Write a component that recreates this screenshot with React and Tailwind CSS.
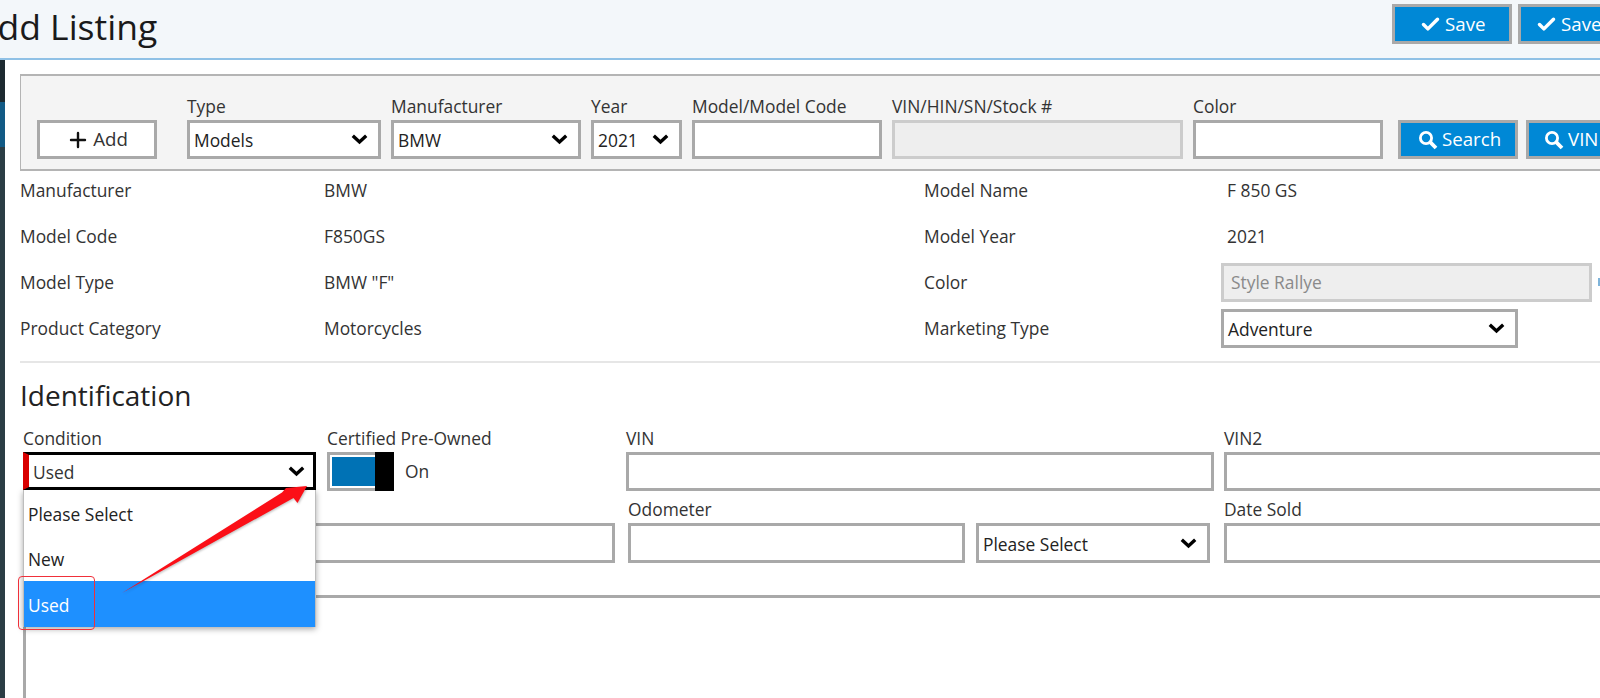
import React from "react";
import { Check, Plus } from "lucide-react";

const Chevron = () => (
  <svg width="17" height="11" viewBox="0 0 17 11" className="shrink-0">
    <path d="M1.8 1.8 L8.5 8 L15.2 1.8" fill="none" stroke="#000" strokeWidth="3.4" />
  </svg>
);

const SearchGlyph = () => (
  <svg width="20" height="20" viewBox="0 0 20 20" className="shrink-0">
    <circle cx="8" cy="8" r="5.6" fill="none" stroke="#fff" strokeWidth="2.8" />
    <path d="M12.2 12.2 L18 18" fill="none" stroke="#fff" strokeWidth="3.8" />
  </svg>
);

const Label = ({ children }) => (
  <div className="mb-[2px] h-[24px] whitespace-nowrap text-[17.4px] leading-[24px] text-[#333]">{children}</div>
);

const Input = ({ h = "h-[39px]", disabled = false, value = "" }) => (
  <input
    readOnly
    disabled={disabled}
    value={value}
    className={`block w-full border-[3px] px-[7px] text-[17.4px] outline-none ${h} ${
      disabled ? "border-[#cccccc] bg-[#eeeeee] text-[#8a8a8a]" : "border-[#a9a9a9] bg-white"
    }`}
  />
);

const Select = ({ value, h = "h-[39px]" }) => (
  <div className={`flex w-full items-center justify-between border-[3px] border-[#a9a9a9] bg-white pl-[4px] pr-[10px] text-[17.4px] text-[#222] ${h}`}>
    <span className="whitespace-nowrap pt-[2px]">{value}</span>
    <Chevron />
  </div>
);

const Field = ({ label, className = "", children }) => (
  <div className={`shrink-0 ${className}`}>
    <Label>{label}</Label>
    {children}
  </div>
);

const BlueButton = ({ icon, children, className = "" }) => (
  <button className={`flex shrink-0 items-center border-[3px] border-[#a9a9a9] bg-[#0088d6] text-[18.7px] text-white ${className}`}>
    {icon}
    {children}
  </button>
);

const rows = [
  ["Manufacturer", "BMW", "Model Name", <span className="pl-[6px]">F 850 GS</span>],
  ["Model Code", "F850GS", "Model Year", <span className="pl-[6px]">2021</span>],
  ["Model Type", 'BMW "F"', "Color", (
    <div className="flex items-center">
      <div className="w-[371px] shrink-0"><Input disabled value="Style Rallye" /></div>
      <span className="ml-[6px] h-[8px] w-[2px] shrink-0 bg-[#7fb4da]" />
    </div>
  )],
  ["Product Category", "Motorcycles", "Marketing Type", <div className="w-[297px]"><Select value="Adventure" /></div>],
];

export default function App() {
  return (
    <div className="relative h-[698px] w-[1600px] overflow-hidden bg-white text-[#333]" style={{ fontFamily: '"Open Sans", "Noto Sans", sans-serif' }}>
      <header className="flex h-[60px] items-start justify-between overflow-hidden border-b-2 border-[#8fc1e6] bg-[#f3f7fa]">
        <h1 className="ml-[-25px] whitespace-nowrap pt-[1px] text-[35.5px] leading-[50px] text-[#1a1a1a]">Add Listing</h1>
        <div className="flex w-[208px] shrink-0 gap-[6px] pt-[4px]">
          <BlueButton icon={<Check size={21} strokeWidth={4} />} className="h-[40px] w-[120px] gap-[4px] pl-[25px]">Save</BlueButton>
          <BlueButton icon={<Check size={21} strokeWidth={4} />} className="h-[40px] w-[160px] gap-[4px] pl-[15px]">Save</BlueButton>
        </div>
      </header>

      <div className="flex">
        <aside className="flex h-[638px] w-[5px] shrink-0 flex-col">
          <div className="h-[42px] bg-[#1d2a30]" />
          <div className="h-[45px] bg-[#125a85]" />
          <div className="flex-1 bg-[#2b3d45]" />
        </aside>

        <main className="w-[1700px] shrink-0 pl-[15px]">
          <section className="mt-[14px] flex h-[97px] items-start gap-[10px] border-x border-y-2 border-[#b4b4b4] bg-[#f4f4f4] pl-[16px] pt-[18px]">
            <button className="mt-[26px] mr-[20px] flex h-[39px] w-[120px] shrink-0 items-center justify-center gap-[3px] border-[3px] border-[#a9a9a9] bg-white text-[18.7px] text-[#333]">
              <Plus size={24} strokeWidth={2.4} className="text-[#111]" />
              Add
            </button>
            <Field label="Type" className="w-[194px]"><Select value="Models" /></Field>
            <Field label="Manufacturer" className="w-[190px]"><Select value="BMW" /></Field>
            <Field label="Year" className="w-[91px]"><Select value="2021" /></Field>
            <Field label="Model/Model Code" className="w-[190px]"><Input /></Field>
            <Field label="VIN/HIN/SN/Stock #" className="w-[291px]"><Input disabled /></Field>
            <Field label="Color" className="w-[190px]"><Input /></Field>
            <div className="ml-[5px] mt-[26px] flex gap-[8px]">
              <BlueButton icon={<SearchGlyph />} className="h-[39px] w-[120px] gap-[4px] pl-[17px]">Search</BlueButton>
              <BlueButton icon={<SearchGlyph />} className="h-[39px] w-[120px] gap-[4px] pl-[15px]">VIN</BlueButton>
            </div>
          </section>

          <section className="mt-[-4px]">
            {rows.map(([a, b, c, d]) => (
              <div key={a} className="grid h-[46px] grid-cols-[304px_600px_297px_1fr] items-center text-[17.4px] text-[#333]">
                <div>{a}</div>
                <div>{b}</div>
                <div>{c}</div>
                <div>{d}</div>
              </div>
            ))}
          </section>

          <div className="mt-[10px] border-t-2 border-[#e6e6e6]" />

          <h2 className="mt-[12px] h-[51px] text-[28px] leading-[40px] text-[#222]">Identification</h2>

          <section className="pl-[3px]">
            <div className="flex h-[71px] items-start">
              <Field label="Condition" className="w-[293px]">
                <div className="flex h-[38px] items-center justify-between border-[3px] border-l-[6px] border-black border-l-[#d90000] bg-white pl-[4px] pr-[8px] text-[17.4px]">
                  <span className="pt-[2px]">Used</span>
                  <Chevron />
                </div>
              </Field>
              <Field label="Certified Pre-Owned" className="ml-[11px] w-[299px]">
                <div className="flex h-[39px] items-center">
                  <div className="flex h-full w-[67px] border-[3px] border-r-0 border-[#a9a9a9] bg-white pl-[2px]">
                    <div className="my-[2px] flex-1 bg-[#0072b5]" />
                    <div className="-my-[3px] w-[19px] bg-black" />
                  </div>
                  <span className="ml-[11px] text-[17.4px]">On</span>
                </div>
              </Field>
              <Field label="VIN" className="w-[588px]"><Input /></Field>
              <Field label="VIN2" className="ml-[10px] w-[400px]"><Input /></Field>
            </div>
            <div className="flex items-start">
              <Field label="" className="w-[592px]"><Input h="h-[40px]" /></Field>
              <Field label="Odometer" className="ml-[13px] w-[337px]"><Input h="h-[40px]" /></Field>
              <Field label="" className="ml-[11px] w-[234px]"><Select value="Please Select" h="h-[40px]" /></Field>
              <Field label="Date Sold" className="ml-[14px] w-[400px]"><Input h="h-[40px]" /></Field>
            </div>
            <div className="mt-[32px] h-[200px] border-[3px] border-[#a9a9a9] bg-white" />
          </section>
        </main>
      </div>

      <ul className="absolute left-[23px] top-[490px] w-[293px] border-x border-[#bdbdbd] bg-white text-[17.4px] text-[#222] shadow-[0_2px_6px_rgba(0,0,0,0.35)]">
        <li className="flex h-[46px] items-center pl-[4px] pt-[2px]">Please Select</li>
        <li className="flex h-[45px] items-center pl-[4px] pt-[2px]">New</li>
        <li className="flex h-[46px] items-center bg-[#1e90ff] pl-[4px] pt-[2px] text-white">Used</li>
      </ul>

      <div className="absolute left-[18px] top-[576px] h-[54px] w-[77px] rounded-[4px] border border-[#f0303a]" />

      <svg className="absolute left-0 top-0 pointer-events-none" width="1600" height="698" style={{ filter: "drop-shadow(1px 1px 1px rgba(0,0,0,0.25))" }}>
        <polygon points="122,593 282,492.5 286,488 307,486 297.5,503 293.5,498" fill="#fb0f17" />
      </svg>
    </div>
  );
}
